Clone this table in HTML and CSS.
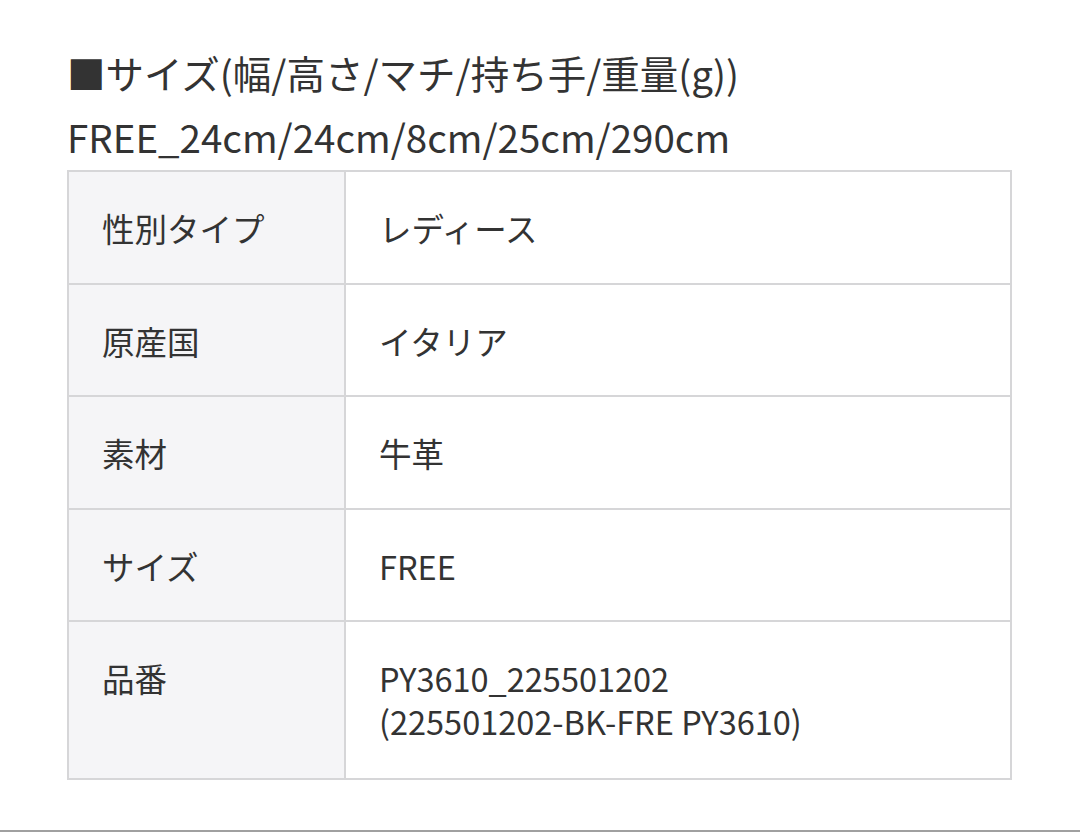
FILE: index.html
```html
<!DOCTYPE html>
<html lang="ja">
<head>
<meta charset="utf-8">
<link rel="stylesheet" href="styles.css">
</head>
<body>
<div class="page">
  <div class="spec">
    <p class="spec-line">■サイズ(幅/高さ/マチ/持ち手/重量(g))</p>
    <p class="spec-line">FREE_24cm/24cm/8cm/25cm/290cm</p>
  </div>
  <table class="info">
    <tr><th>性別タイプ</th><td>レディース</td></tr>
    <tr><th>原産国</th><td>イタリア</td></tr>
    <tr><th>素材</th><td>牛革</td></tr>
    <tr><th>サイズ</th><td>FREE</td></tr>
    <tr class="last"><th>品番</th><td>PY3610_225501202<br>(225501202-BK-FRE PY3610)</td></tr>
  </table>
</div>
<div class="bottom-line"></div>
</body>
</html>
```

FILE: styles.css
```css
html, body {
  margin: 0;
  padding: 0;
  background: #ffffff;
}
body {
  width: 1080px;
  height: 833px;
  position: relative;
  overflow: hidden;
  font-family: "Noto Sans CJK JP", "Noto Sans", sans-serif;
  color: #333333;
}
.page {
  padding: 40px 0 0 67px;
}
.spec-line {
  margin: 0;
  font-size: 38.5px;
  line-height: 64px;
}
.info {
  margin-top: 2px;
  width: 945px;
  border-collapse: collapse;
  font-size: 32.5px;
  line-height: 43px;
}
.info th, .info td {
  border: 2px solid #d6d6d8;
  padding: 34px 33px 33.5px;
  text-align: left;
  font-weight: normal;
  vertical-align: top;
}
.info .last th, .info .last td {
  padding-bottom: 36px;
}
.info th {
  width: 209px;
  background: #f5f5f7;
}
.info td {
  background: #ffffff;
}
.bottom-line {
  position: absolute;
  left: 0;
  right: 0;
  bottom: 1px;
  height: 2px;
  background: #a0a0a0;
}
```
